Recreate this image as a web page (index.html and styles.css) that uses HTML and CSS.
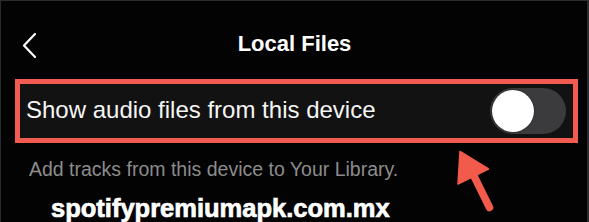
FILE: index.html
```html
<!DOCTYPE html>
<html>
<head>
<meta charset="utf-8">
<link rel="stylesheet" href="styles.css">
</head>
<body>
<div class="screen">
  <div class="header">
    <svg class="back" width="16" height="28" viewBox="0 0 16 28"><path d="M13 3 L2 14.5 L13 26" fill="none" stroke="#fff" stroke-width="2.2" stroke-linecap="round" stroke-linejoin="round"/></svg>
    <div class="title">Local Files</div>
  </div>
  <div class="setting">
    <div class="label">Show audio files from this device</div>
    <div class="toggle"><div class="knob"></div></div>
  </div>
  <div class="desc">Add tracks from this device to Your Library.</div>
  <div class="watermark">spotifypremiumapk.com.mx</div>
  <svg class="arrow" width="589" height="222" viewBox="0 0 589 222">
    <line x1="472" y1="172" x2="489.5" y2="207.5" stroke="#f25b4b" stroke-width="7.5" stroke-linecap="round"/>
    <polygon points="460,151.5 458,184 488.5,169" fill="#f25b4b" stroke="#f25b4b" stroke-width="1.5" stroke-linejoin="round"/>
  </svg>
</div>
</body>
</html>
```
FILE: styles.css
```css
html, body {
  margin: 0;
  padding: 0;
  background: #000;
}
.screen {
  position: relative;
  width: 589px;
  height: 222px;
  box-sizing: border-box;
  border-top: 1px solid #2c2c2c;
  border-left: 1px solid #2c2c2c;
  border-right: 2px solid #2c2c2c;
  background: #030303;
  overflow: hidden;
  font-family: "Liberation Sans", Arial, sans-serif;
}
.header {
  position: relative;
  height: 32px;
  padding-top: 27px;
  display: flex;
  justify-content: center;
  align-items: center;
}
.back {
  position: absolute;
  left: 21px;
  top: 30px;
}
.title {
  color: #fff;
  font-weight: bold;
  font-size: 22px;
  line-height: 32px;
  margin-left: 1px;
}
.setting {
  margin: 19px 0 0 14px;
  width: 563px;
  height: 64px;
  box-sizing: border-box;
  border: 5px solid #f25c50;
  background: #121212;
  display: flex;
  align-items: center;
  justify-content: space-between;
  padding: 0 7px 3px 6px;
}
.label {
  color: #f5f5f5;
  font-size: 24px;
  line-height: 30px;
}
.toggle {
  width: 76px;
  height: 46px;
  border-radius: 23px;
  background: #3b3b3d;
  box-sizing: border-box;
  padding: 2px;
  margin-top: 3px;
}
.knob {
  width: 42px;
  height: 42px;
  border-radius: 50%;
  background: #fff;
  box-shadow: 0 0 2px rgba(0,0,0,0.6);
}
.desc {
  margin: 14px 0 0 28px;
  color: #8c8c8c;
  font-size: 19.5px;
  line-height: 24px;
}
.watermark {
  margin: 14px 0 0 50px;
  color: #fff;
  font-weight: bold;
  font-size: 25.5px;
  line-height: 26px;
  -webkit-text-stroke: 0.7px #fff;
}
.arrow {
  position: absolute;
  left: -1px;
  top: -1px;
}
```
